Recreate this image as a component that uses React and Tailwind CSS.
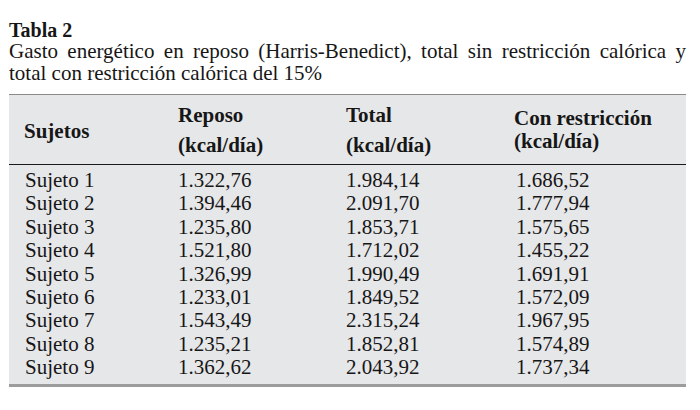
const rows = [
  ["Sujeto 1", "1.322,76", "1.984,14", "1.686,52"],
  ["Sujeto 2", "1.394,46", "2.091,70", "1.777,94"],
  ["Sujeto 3", "1.235,80", "1.853,71", "1.575,65"],
  ["Sujeto 4", "1.521,80", "1.712,02", "1.455,22"],
  ["Sujeto 5", "1.326,99", "1.990,49", "1.691,91"],
  ["Sujeto 6", "1.233,01", "1.849,52", "1.572,09"],
  ["Sujeto 7", "1.543,49", "2.315,24", "1.967,95"],
  ["Sujeto 8", "1.235,21", "1.852,81", "1.574,89"],
  ["Sujeto 9", "1.362,62", "2.043,92", "1.737,34"],
];

export default function App() {
  return (
    <div className="w-[700px] h-[410px] bg-white text-[#161616] font-['Liberation_Serif',serif] pl-[9px] pt-[20px]">
      {/* Caption */}
      <div className="w-[677px]">
        <p className="text-[20px] leading-[20px] font-bold">Tabla 2</p>
        <p className="text-[21px] leading-[22px] text-justify">
          Gasto energético en reposo (Harris-Benedict), total sin restricción calórica y total con restricción calórica del 15%
        </p>
      </div>

      {/* Table */}
      <div className="w-[677px] mt-[10px] bg-[#e6e7e9] border-t border-[#8a8a8a] border-b-[3px] border-b-[#9c9c9c] text-[21px]">
        <div className="h-[70px] border-b border-[#1a1a1a] pl-[15px] grid grid-cols-[154px_168px_168px_1fr] items-center font-bold">
          <div className="leading-[23px] pt-[3px]">Sujetos</div>
          <div className="leading-[30px]">
            <div>Reposo</div>
            <div>(kcal/día)</div>
          </div>
          <div className="leading-[30px]">
            <div>Total</div>
            <div>(kcal/día)</div>
          </div>
          <div className="leading-[23px]">
            <div>Con restricción</div>
            <div>(kcal/día)</div>
          </div>
        </div>
        <div className="pt-[4px] pb-[5px] pl-[16px]">
          {rows.map((r) => (
            <div key={r[0]} className="grid grid-cols-[153px_168px_170px_1fr] leading-[23.375px]">
              <div>{r[0]}</div>
              <div>{r[1]}</div>
              <div>{r[2]}</div>
              <div>{r[3]}</div>
            </div>
          ))}
        </div>
      </div>
    </div>
  );
}
